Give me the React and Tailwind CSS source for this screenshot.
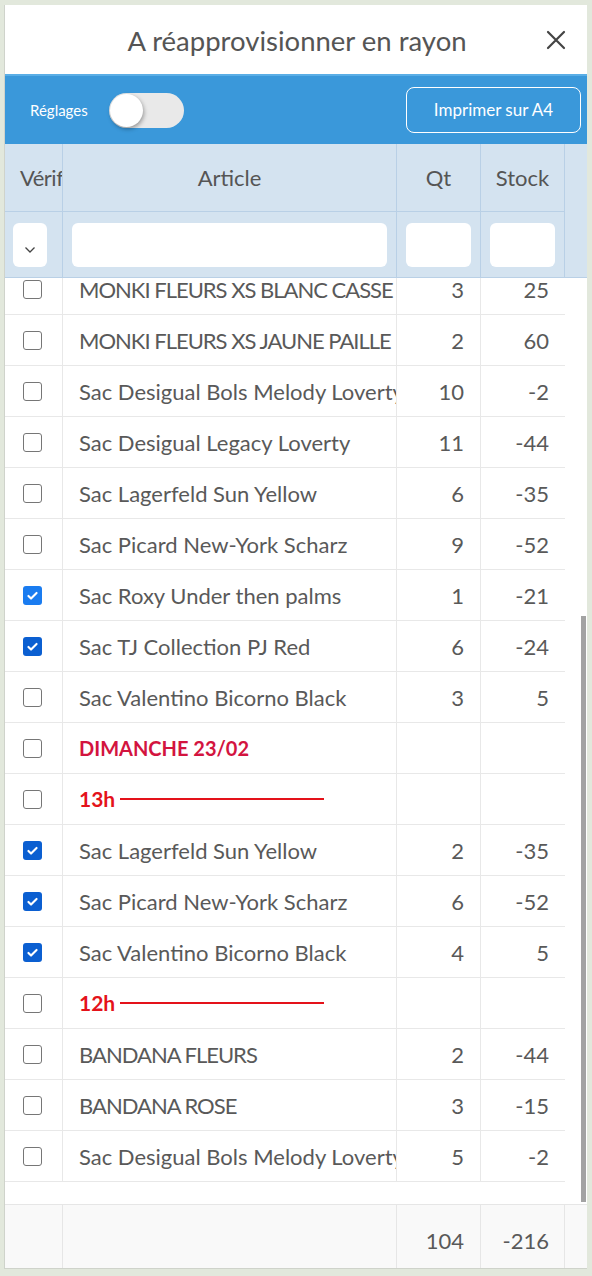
import React from "react";

const rows = [
  { name: "MONKI FLEURS XS BLANC CASSE", qt: 3, stock: 25, caps: true },
  { name: "MONKI FLEURS XS JAUNE PAILLE", qt: 2, stock: 60, caps: true },
  { name: "Sac Desigual Bols Melody Loverty", qt: 10, stock: -2 },
  { name: "Sac Desigual Legacy Loverty", qt: 11, stock: -44 },
  { name: "Sac Lagerfeld Sun Yellow", qt: 6, stock: -35 },
  { name: "Sac Picard New-York Scharz", qt: 9, stock: -52 },
  { name: "Sac Roxy Under then palms", qt: 1, stock: -21, checked: true, light: true },
  { name: "Sac TJ Collection PJ Red", qt: 6, stock: -24, checked: true },
  { name: "Sac Valentino Bicorno Black", qt: 3, stock: 5 },
  { name: "DIMANCHE 23/02", type: "day" },
  { name: "13h", type: "hour" },
  { name: "Sac Lagerfeld Sun Yellow", qt: 2, stock: -35, checked: true },
  { name: "Sac Picard New-York Scharz", qt: 6, stock: -52, checked: true },
  { name: "Sac Valentino Bicorno Black", qt: 4, stock: 5, checked: true },
  { name: "12h", type: "hour" },
  { name: "BANDANA FLEURS", qt: 2, stock: -44, caps: true },
  { name: "BANDANA ROSE", qt: 3, stock: -15, caps: true },
  { name: "Sac Desigual Bols Melody Loverty", qt: 5, stock: -2 },
];

const Checkbox = ({ checked, light }) =>
  checked ? (
    <div
      className={
        "w-[19px] h-[19px] rounded-[3px] flex items-center justify-center " +
        (light ? "bg-[#1a7cf0]" : "bg-[#0b5fd1]")
      }
    >
      <svg width="13" height="13" viewBox="0 0 16 16">
        <path d="M3 8.5l3.2 3.2L13 4.8" fill="none" stroke="white" strokeWidth="2.6" strokeLinecap="round" strokeLinejoin="round" />
      </svg>
    </div>
  ) : (
    <div className="w-[19px] h-[19px] rounded-[3px] border-[1.5px] border-[#767676] bg-white" />
  );

const Row = ({ row }) => (
  <div className="flex h-[51px] border-b border-[#e8e8e8] text-[22px] text-[#595959]">
    <div className="w-[58px] shrink-0 flex items-center justify-center border-r border-[#e8e8e8] pr-[2px]">
      <Checkbox checked={row.checked} light={row.light} />
    </div>
    <div className="w-[334px] shrink-0 flex items-center pl-4 border-r border-[#e8e8e8] overflow-hidden whitespace-nowrap">
      {row.type === "day" && (
        <span className="font-bold text-[#d3143f] text-[20px]">{row.name}</span>
      )}
      {row.type === "hour" && (
        <span className="font-bold text-[#e4121a] text-[21px] flex items-center">
          {row.name}
          <span className="ml-[5px] block w-[204px] h-[2px] bg-[#e4121a]" />
        </span>
      )}
      {!row.type && <span className={row.caps ? "tracking-[-1px]" : ""}>{row.name}</span>}
    </div>
    <div className="w-[84px] shrink-0 flex items-center justify-end pr-4 border-r border-[#e8e8e8]">
      {row.qt}
    </div>
    <div className="w-[84px] shrink-0 flex items-center justify-end pr-4">
      {row.stock}
    </div>
  </div>
);

export default function App() {
  return (
    <div
      className="w-[592px] h-[1276px] bg-[#e2e8dc] pt-[5px] pl-[4px] pr-[5px]"
      style={{ fontFamily: "Lato, 'Open Sans', sans-serif" }}
    >
      <div className="w-[583px] h-[1264px] bg-white border-l border-b border-[#cfd3cb] flex flex-col overflow-hidden">
        {/* Title */}
        <div className="h-[69px] shrink-0 flex items-center relative">
          <div className="flex-1 text-center text-[27.5px] text-[#555] pl-[2px] pt-[2px]">A réapprovisionner en rayon</div>
          <button className="absolute right-[20px] top-[24px] text-[#444]">
            <svg width="22" height="22" viewBox="0 0 22 22">
              <path d="M3 3l16 16M19 3L3 19" stroke="#444" strokeWidth="2.2" strokeLinecap="round" />
            </svg>
          </button>
        </div>

        {/* Blue toolbar */}
        <div className="h-[70px] shrink-0 bg-[#3a98da] border-t-2 border-[#5aaee6] flex items-center pl-[25px] pr-[6px]">
          <span className="text-white text-[15px]">Réglages</span>
          <div className="ml-[21px] w-[75px] h-[35px] rounded-full bg-[#e9e9e9] flex items-center pl-[1px]">
            <div className="w-[33px] h-[33px] rounded-full bg-white shadow-[1px_2px_4px_rgba(0,0,0,0.35)]" />
          </div>
          <div className="flex-1" />
          <button className="w-[175px] h-[46px] border border-white rounded-[8px] text-white text-[17px]">
            Imprimer sur A4
          </button>
        </div>

        {/* Header */}
        <div className="shrink-0 bg-[#d4e3f0] flex border-b border-[#b9d0e6] text-[22px] text-[#555]">
          <div className="w-[58px] shrink-0 border-r border-[#b9d0e6] flex flex-col">
            <div className="h-[68px] border-b border-[#b9d0e6] flex items-center pl-[15px] overflow-hidden whitespace-nowrap tracking-[-0.5px]">
              Vérif
            </div>
            <div className="h-[65px] flex items-center pl-[8px]">
              <div className="w-[34px] h-[44px] bg-white rounded-[6px] flex items-end justify-center pb-[13px]">
                <svg width="12" height="8" viewBox="0 0 12 8">
                  <path d="M1.5 1.5L6 6l4.5-4.5" fill="none" stroke="#444" strokeWidth="1.3" />
                </svg>
              </div>
            </div>
          </div>
          <div className="w-[334px] shrink-0 border-r border-[#b9d0e6] flex flex-col">
            <div className="h-[68px] border-b border-[#b9d0e6] flex items-center justify-center">
              Article
            </div>
            <div className="h-[65px] flex items-center pl-[9px]">
              <div className="w-[315px] h-[44px] bg-white rounded-[6px]" />
            </div>
          </div>
          <div className="w-[84px] shrink-0 border-r border-[#b9d0e6] flex flex-col">
            <div className="h-[68px] border-b border-[#b9d0e6] flex items-center justify-center">
              Qt
            </div>
            <div className="h-[65px] flex items-center pl-[9px]">
              <div className="w-[65px] h-[44px] bg-white rounded-[6px]" />
            </div>
          </div>
          <div className="w-[84px] shrink-0 border-r border-[#b9d0e6] flex flex-col">
            <div className="h-[68px] border-b border-[#b9d0e6] flex items-center justify-center">
              Stock
            </div>
            <div className="h-[65px] flex items-center pl-[9px]">
              <div className="w-[65px] h-[44px] bg-white rounded-[6px]" />
            </div>
          </div>
          <div className="flex-1" />
        </div>

        {/* Body */}
        <div className="h-[926px] shrink-0 flex overflow-hidden">
          <div className="w-[560px] shrink-0 overflow-hidden">
            <div className="-mt-[14px]">
              {rows.map((r, i) => (
                <Row key={i} row={r} />
              ))}
            </div>
          </div>
          <div className="flex-1 pl-[16px]">
            <div className="mt-[338px] w-[5px] h-[586px] bg-[#a3a3a3]" />
          </div>
        </div>

        {/* Footer */}
        <div className="flex-1 flex bg-[#f9f9f9] border-t border-[#e6e6e6] text-[22px] text-[#595959]">
          <div className="w-[58px] shrink-0 border-r border-[#e6e6e6]" />
          <div className="w-[334px] shrink-0 border-r border-[#e6e6e6]" />
          <div className="w-[84px] shrink-0 border-r border-[#e6e6e6] flex items-center justify-end pr-4 pt-[8px]">104</div>
          <div className="w-[84px] shrink-0 border-r border-[#e6e6e6] flex items-center justify-end pr-[15px] pt-[8px]">-216</div>
          <div className="flex-1" />
        </div>
      </div>
    </div>
  );
}
